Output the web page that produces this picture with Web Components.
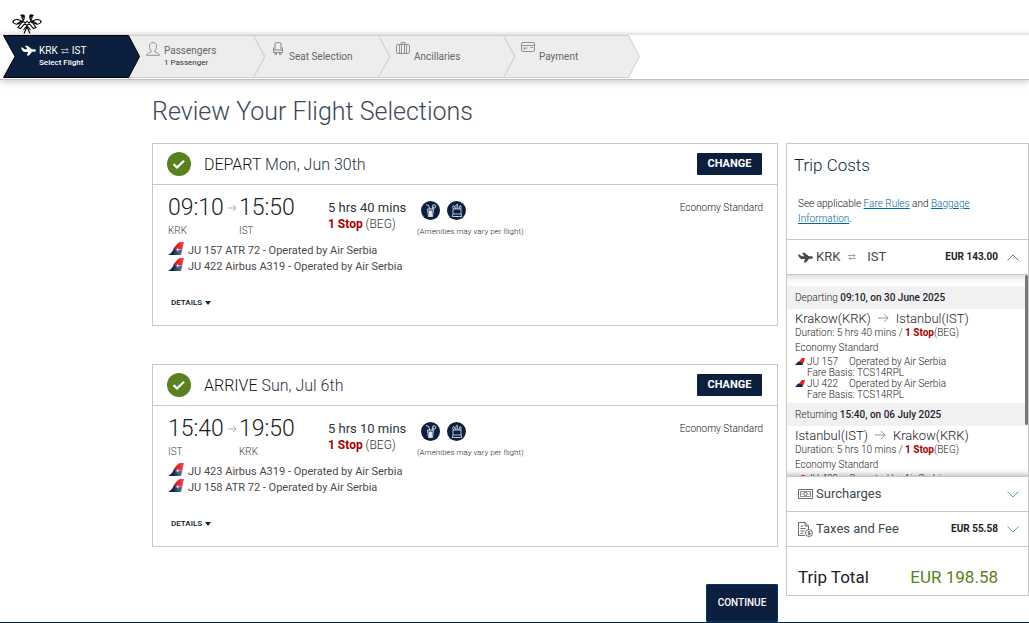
<!DOCTYPE html>
<html lang="en">
<head>
<meta charset="utf-8">
<meta name="viewport" content="width=device-width, initial-scale=1">
<title>Review Your Flight Selections</title>
<style>
  :root { --navy: #0c1f3f; --line: #c8c8c8; --red: #a60000; --green: #5a8020; --text: #2c3440; }
  body { margin: 0; font-family: Roboto, "Liberation Sans", sans-serif; color: var(--text); background: #fff; }
</style>
</head>
<body>
<booking-page></booking-page>

<script>
const ICONS = {
  plane: '<svg viewBox="0 0 15 11" width="15" height="11"><path fill="currentColor" d="M0 2.500h1.500l2 1.800h3L4 .8h2.500L11 4.300h2.200c1.200 0 1.800.6 1.800 1.200s-.8 1.300-1.900 1.300h-2L8 10.500H5.800L7 7H3.400C2 6.800.8 5 0 2.500z"/></svg>',
  person: '<svg viewBox="0 0 14 14" width="14" height="14" fill="none" stroke="currentColor" stroke-width=".9"><path d="M5.200 8.800C3.900 7.700 3.500 6 3.500 4.200 3.500 2 5 .6 7 .6s3.500 1.400 3.500 3.600c0 1.800-.4 3.500-1.700 4.600v1.200c1.800.6 4 1 4.700 3.300H.5C1.200 11 3.400 10.600 5.200 10z"/></svg>',
  seat: '<svg viewBox="0 0 10 13" width="10" height="13" fill="none" stroke="currentColor"><path d="M2 7.500V2Q2 .6 3.500.6h3Q8 .6 8 2v5.500M.6 5.500v5h8.800v-5M.6 8h8.800M2 10.500v2h1.500v-2M6.500 10.500v2H8v-2"/></svg>',
  bag: '<svg viewBox="0 0 14 12" width="14" height="12" fill="none" stroke="currentColor" stroke-width=".9"><rect x=".5" y="2.500" width="13" height="9" rx="1.500"/><path d="M5 2.500V.6h4v1.900M3.500 2.500v9M5.500 2.500v9M8.500 2.500v9M10.500 2.500v9"/></svg>',
  card: '<svg viewBox="0 0 14 10" width="14" height="10" fill="none" stroke="currentColor" stroke-width=".9"><rect x=".5" y=".5" width="13" height="9" rx="1.500"/><path d="M.5 3.500h13M2.500 6h4M2.500 7h2M9.500 5.500h2.500"/></svg>',
  swap: '<svg viewBox="0 0 8 6" width="8" height="6" fill="none" stroke="currentColor" stroke-width=".8"><path d="M0 1.500h7M5.500 0L7 1.500 5.500 3M8 4.500H1M2.500 3L1 4.500 2.500 6"/></svg>',
  arrow: '<svg viewBox="0 0 11 10" width="11" height="10" fill="none" stroke="currentColor" stroke-width=".9"><path d="M0 5h10M6 .8L10.200 5 6 9.200"/></svg>',
  smallArrow: '<svg viewBox="0 0 9 8" width="9" height="8" fill="none" stroke="currentColor" stroke-width=".8"><path d="M0 4h8M5 1l3 3-3 3"/></svg>',
  check: '<svg viewBox="0 0 24 24" width="24" height="24"><circle cx="12" cy="12" r="12" fill="#5a8020"/><path d="M6.500 12.200l3.500 3.300 7-6.800" fill="none" stroke="#fff" stroke-width="2.300"/></svg>',
  tail: '<svg viewBox="0 0 16 13" width="16" height="13"><defs><linearGradient id="r"><stop stop-color="#a81c26"/><stop offset=".55" stop-color="#f0202a"/><stop offset="1" stop-color="#e86060"/></linearGradient><linearGradient id="b"><stop offset=".3" stop-color="#101f44"/><stop offset="1" stop-color="#6c7a98"/></linearGradient></defs><path d="M12 0h4l-1.700 7.500H5Q9 1 12 0z" fill="url(#r)"/><path d="M6 6.500q4 2 8.500.5L13 13H0q3.500-1.500 6-6.500z" fill="url(#b)"/><path d="M9.500 5.500l.8 1.700 1.700.3-1.600.8-.4 1.700-.8-1.600-1.700-.3 1.500-.8z" fill="#dfe3ee"/></svg>',
  drink: '<svg viewBox="0 0 19 19" width="19" height="19"><circle cx="9.500" cy="9.500" r="9.500" fill="#0c1f3f"/><g fill="none" stroke="#fff" stroke-width=".8"><path d="M5 3.500l2.500 1 1.500 4M6.500 8h6l-1 7.500h-4zM11 8l1.500-2.500"/><circle cx="13" cy="5.500" r="1.700"/></g><path d="M7.500 9.500h4l-.6 5.500H8.200z" fill="#dfe3ea"/></svg>',
  snack: '<svg viewBox="0 0 19 19" width="19" height="19"><circle cx="9.500" cy="9.500" r="9.500" fill="#0c1f3f"/><g fill="none" stroke="#dfe3ea" stroke-width=".8"><path d="M6 8h8v5H6zM6 13l-.8 2.500h9.600L14 13M6.500 8L5.500 5.500 7 4.500 8.500 8M9 8V4l1.500-.8L11 8M12 8l1-3.500 1 .5v3M8.500 15.500h3"/></g></svg>',
  money: '<svg viewBox="0 0 15 10" width="15" height="10" fill="none" stroke="currentColor" stroke-width=".8"><path d="M.5.5h14v9H.5z"/><path d="M2.500 2.500h10v5h-10z" stroke-width=".6"/><circle cx="7.500" cy="5" r="1.700"/><path d="M3.500 5h1M10.500 5h1"/></svg>',
  receipt: '<svg viewBox="0 0 15 15" width="15" height="15" fill="none" stroke="currentColor" stroke-width=".8"><path d="M7 13.500H.5V.5H7L10.500 4v3M7 .5V4h3.500M2.500 4h2.500M2.500 6.500h5M2.500 9h4M2.500 11.300h3"/><circle cx="11" cy="11" r="3.500"/><path d="M12.200 9.700Q10 9 10 10.200T12 11.600 9.900 12.500M11 8.800v4.500" stroke-width=".7"/></svg>',
  up: '<svg viewBox="0 0 12 7" width="12" height="7" fill="none" stroke="currentColor" stroke-width=".9"><path d="M.5 6.500L6 1l5.500 5.500"/></svg>',
  down: '<svg viewBox="0 0 12 7" width="12" height="7" fill="none" stroke="currentColor" stroke-width=".9"><path d="M.5.5L6 6 11.500.5"/></svg>',
  logo: '<svg viewBox="0 0 30 20" width="30" height="20" fill="none" stroke="#000" stroke-width="1.100"><path d="M9.500 2.500L12 8l6.500 8M20.500 2.500L18 8l-6.500 8M12 1.500V5L6 13.500l2.500 1L15 7M18 1.500V5l6 8.500-2.500 1L15 7M15 13l-3 6.500M15 13l3 6.500"/><path d="M11 9C7 4 2 5 .8 8c2 3 6.200 3 8.200-.5M5 10l5-3.500M19 9c4-5 9-4 10.200-1-2 3-6.200 3-8.200-.5M25 10l-5-3.500"/><path d="M8 1.800L9.800.3l2.700.5v3.500L10 2.800zM22 1.800L20.200.3l-2.700.5v3.500L20 2.800z" fill="#000" stroke="none"/></svg>'
};

function define(name, css, markup) {
  customElements.define(name, class extends HTMLElement {
    connectedCallback() {
      if (this.shadowRoot) return;
      const t = document.createElement('template');
      const get = a => this.getAttribute(a) || '';
      t.innerHTML = `<style>:host{display:block}*{box-sizing:border-box}svg{display:block;flex:none}${css}</style>` +
        (typeof markup === 'function' ? markup(get) : markup);
      this.attachShadow({ mode: 'open' }).append(t.content.cloneNode(true));
    }
  });
}

define('ui-icon', ':host{display:block;flex:none}', g => ICONS[g('name')]);

define('step-item', `
  :host { position: relative; flex: 0 1 125px; height: 44px; color: #666; --fill: #ededed; --edge: #d0d0d0; }
  :host([current]) { color: #fff; --fill: #0c1f3f; --edge: #000; z-index: 1; }
  .shape { position: absolute; left: 0; top: 0; }
  .shape path { fill: var(--fill); stroke: var(--edge); }
  a { position: relative; display: flex; gap: 4px; padding: 7px 0 0 18px; color: inherit; text-decoration: none; font-size: 10px; line-height: 12px; }
  .label { padding-top: 3px; white-space: nowrap; }
  :host([single]) .label { padding-top: 9px; }
  ui-icon { display: flex; justify-content: center; width: 14px; color: #888; }
  :host([current]) ui-icon { color: #fff; padding-top: 3px; }
  .sub { display: block; font-size: 8px; color: #333; }
  :host([current]) .sub { color: #fff; font-weight: 500; }
`, g => `<svg class="shape" width="138" height="44" viewBox="0 0 138 44"><path d="M.5.500H125.500L136.500 21.500 125.500 42.500H.5L12 21.500z"/></svg>
  <a href="#"><ui-icon name="${g('icon')}"></ui-icon><span class="label"><slot></slot><span class="sub">${g('sub')}</span></span></a>`);

define('site-header', `
  .brand { height: 35px; padding: 14px 0 0 12px; box-shadow: inset 0 -6px 5px -5px #ddd; }
  nav { display: flex; height: 45px; padding-left: 3px; border-bottom: 1px solid #c0c0c0; box-shadow: 0 2px 7px #ccc; }
  .route { display: flex; align-items: center; gap: 3px; }
  .route ui-icon { color: #ccc; }
`, `<div class="brand"><ui-icon name="logo"></ui-icon></div>
  <nav aria-label="Booking steps">
    <step-item current icon="plane" sub="Select Flight"><span class="route">KRK <ui-icon name="swap"></ui-icon> IST</span></step-item>
    <step-item icon="person" sub="1 Passenger">Passengers</step-item>
    <step-item single icon="seat">Seat Selection</step-item>
    <step-item single icon="bag">Ancillaries</step-item>
    <step-item single icon="card">Payment</step-item>
  </nav>`);

define('flight-card', `
  :host { box-sizing: border-box; border: 1px solid var(--line); min-height: 183px; background: #fff; }
  header { display: flex; align-items: center; height: 41px; padding: 0 15px 0 14px; border-bottom: 1px solid var(--line); }
  h2 { flex: 1; margin: 0 0 0 13px; padding-top: 2px; font-size: 16px; line-height: 24px; font-weight: 300; }
  h2 span { color: #111; }
  .change { width: 65px; height: 22px; padding: 0; border: 0; border-radius: 1px; background: var(--navy); color: #fff; font: 700 11px/22px Roboto, sans-serif; }
  .body { display: grid; grid-template-columns: 160px 89px 1fr auto; padding: 8px 14px 0 15px; }
  .times { display: grid; grid-template-columns: 57px 14px auto; justify-content: start; align-items: center; font-size: 23px; line-height: 30px; font-weight: 300; color: #1c1c1c; }
  .times small { font-size: 10px; line-height: 16px; color: #444; }
  .times ui-icon { color: #999; padding-left: 3px; }
  .duration { padding-top: 6px; font-size: 13px; line-height: 17px; }
  .duration p { margin: 0; font-size: 12px; font-weight: 300; }
  b { color: var(--red); font-weight: 700; }
  .amenities { display: flex; gap: 7px; padding: 8px 0 0 4px; }
  .note { margin: 6px 0 0; font-size: 8px; line-height: 12px; font-weight: 300; color: #222; }
  .fare { font-size: 10px; line-height: 30px; font-weight: 300; color: #111; }
  ul { margin: 3px 0 0 15px; padding: 0; list-style: none; font-size: 11px; line-height: 16px; font-weight: 400; color: #4a4a4a; }
  .details { display: flex; align-items: center; gap: 3px; margin: 22px 0 0 18px; padding: 0; border: 0; background: none; font: 500 8px/14px Roboto, sans-serif; color: #111; }
  .details::after { content: ""; border: 3px solid transparent; border-top: 4px solid var(--navy); border-bottom: 0; }
`, g => `<header><ui-icon name="check"></ui-icon><h2><span>${g('kind')}</span> ${g('date')}</h2><button class="change" type="button">CHANGE</button></header>
  <div class="body">
    <div class="times"><span>${g('start')}</span><ui-icon name="smallArrow"></ui-icon><span>${g('end')}</span><small>${g('from')}</small><i></i><small>${g('to')}</small></div>
    <div class="duration">${g('time')}<p><b>1 Stop</b> (BEG)</p></div>
    <div><div class="amenities"><ui-icon name="drink"></ui-icon><ui-icon name="snack"></ui-icon></div><p class="note">(Amenities may vary per flight)</p></div>
    <div class="fare">Economy Standard</div>
  </div>
  <ul role="list"><slot></slot></ul>
  <button class="details" type="button">DETAILS</button>`);

define('flight-leg', `:host { display: flex; gap: 4px; line-height: 16px; } span { padding-top: 1px; line-height: 15px; } ui-icon { width: 16px; height: 13px; }`,
  `<ui-icon name="tail"></ui-icon><span><slot></slot></span>`);

define('trip-leg', `
  h3 { margin: 0; padding-left: 8px; font-size: 10px; line-height: 23px; font-weight: 300; background: #f1f1f1; color: #222; }
  h3 b { font-weight: 500; color: #1c2430; }
  .info { padding: 0 8px; font-size: 10px; font-weight: 300; }
  .places { display: flex; align-items: center; gap: 7px; font-size: 13px; line-height: 19px; height: 18px; font-weight: 300; color: #222; }
  .places ui-icon { color: #888; }
  p { margin: 0; line-height: 11px; color: #222; }
  p b { color: var(--red); font-weight: 700; }
  .cabin { padding-top: 4px; line-height: 12px; }
  .seg { display: grid; grid-template-columns: 12px 42px 1fr; line-height: 11px; color: #222; }
  .segs { padding: 2px 0 3px; }
  .seg .basis { grid-column: 2 / 4; }
`, g => {
    const seg = n => `<div class="seg"><tail-mini></tail-mini><span>${n}</span><span>Operated by Air Serbia</span><span class="basis">Fare Basis: TCS14RPL</span></div>`;
    return `<h3>${g('kind')} <b>${g('when')}</b></h3>
    <div class="info"><div class="places">${g('from')} <ui-icon name="arrow"></ui-icon> ${g('to')}</div>
    <p>Duration: ${g('time')} / <b>1 Stop</b>(BEG)</p><p class="cabin">Economy Standard</p>
    <div class="segs">${g('flights').split(',').map(seg).join('')}</div></div>`;
  });

define('tail-mini', ':host{padding-top:2px}', '<svg viewBox="0 0 16 12" width="10" height="7" preserveAspectRatio="none"><path d="M11 0h5l-2 8H5z" fill="#e5202b"/><path d="M5 6l8 2-1 4H0z" fill="#16264c"/></svg>');

define('cost-row', `
  button { display: flex; align-items: center; width: 100%; height: 34px; padding: 0 9px 0 11px; border: 0; background: #fff; text-align: left; font: 400 13px/20px Roboto, sans-serif; color: #40474f; }
  .name { flex: 1; display: flex; align-items: center; gap: 8px; padding-left: 3px; }
  b { font-size: 10px; font-weight: 700; color: #222; margin-right: 9px; }
  .chev { color: #4a90ae; }
  :host([open]) .chev { color: #667; }
`, g => `<button type="button"><ui-icon name="${g('icon')}"></ui-icon><span class="name"><slot></slot></span><b>${g('price')}</b><ui-icon class="chev" name="${g('chev')}"></ui-icon></button>`);

define('trip-costs', `
  :host { border: 1px solid var(--line); background: #fff; }
  h2 { margin: 0; padding: 8px 7px 0; font-size: 17px; line-height: 26px; font-weight: 300; color: #0c1f3f; }
  .rules { margin: 0; padding: 18px 40px 13px 11px; font-size: 10px; line-height: 15px; font-weight: 300; color: #111; }
  a { color: #0067a5; text-decoration: underline; }
  cost-row, .total { border-top: 1px solid var(--line); }
  .scroll { position: relative; height: 202px; overflow: hidden; border-top: 1px solid var(--line); padding-top: 11px; box-shadow: inset 0 9px 9px -8px #ccc, inset 0 -8px 7px -8px #999; }
  .thumb { position: absolute; right: 0; top: 0; width: 3px; height: 150px; background: #777; border-radius: 2px; }
  .swap { color: #888; padding-right: 3px; }
  .total { display: flex; justify-content: space-between; align-items: center; height: 49px; padding: 11px 30px 0 11px; font-size: 17px; color: #222; }
  .total b { font-weight: 400; color: var(--green); }
`, `<h2>Trip Costs</h2>
  <p class="rules">See applicable <a href="#">Fare Rules</a> and <a href="#">Baggage Information</a>.</p>
  <cost-row open icon="plane" price="EUR 143.00" chev="up"><span>KRK</span><ui-icon class="swap" name="swap"></ui-icon><span>IST</span></cost-row>
  <div class="scroll">
    <trip-leg kind="Departing" when="09:10, on 30 June 2025" from="Krakow(KRK)" to="Istanbul(IST)" time="5 hrs 40 mins" flights="JU 157,JU 422"></trip-leg>
    <trip-leg kind="Returning" when="15:40, on 06 July 2025" from="Istanbul(IST)" to="Krakow(KRK)" time="5 hrs 10 mins" flights="JU 423,JU 158"></trip-leg>
    <div class="thumb"></div>
  </div>
  <cost-row icon="money" chev="down">Surcharges</cost-row>
  <cost-row icon="receipt" price="EUR 55.58" chev="down">Taxes and Fee</cost-row>
  <div class="total"><span>Trip Total</span><b>EUR 198.58</b></div>`);

define('booking-page', `
  .page { border-bottom: 1px solid var(--navy); }
  main { display: grid; grid-template-columns: minmax(0, 1fr) 243px; column-gap: 8px; align-items: start; padding-left: 152px; }
  h1 { grid-column: 1 / 3; margin: 15px 0; font-size: 25px; line-height: 33px; font-weight: 300; color: #3c4858; }
  .flights { display: grid; row-gap: 38px; }
  .actions { display: flex; justify-content: flex-end; padding-top: 37px; }
  .continue { width: 72px; height: 38px; padding: 0; border: 1px solid #003a63; border-radius: 1px; background: var(--navy); color: #fff; font: 500 10px/20px Roboto, sans-serif; }
`, `<div class="page"><site-header></site-header><main>
  <h1>Review Your Flight Selections</h1>
  <div><div class="flights">
    <flight-card kind="DEPART" date="Mon, Jun 30th" start="09:10" end="15:50" from="KRK" to="IST" time="5 hrs 40 mins"><flight-leg role="listitem">JU 157 ATR 72 - Operated by Air Serbia</flight-leg><flight-leg role="listitem">JU 422 Airbus A319 - Operated by Air Serbia</flight-leg></flight-card>
    <flight-card kind="ARRIVE" date="Sun, Jul 6th" start="15:40" end="19:50" from="IST" to="KRK" time="5 hrs 10 mins"><flight-leg role="listitem">JU 423 Airbus A319 - Operated by Air Serbia</flight-leg><flight-leg role="listitem">JU 158 ATR 72 - Operated by Air Serbia</flight-leg></flight-card>
  </div>
  <div class="actions"><button class="continue" type="button">CONTINUE</button></div></div>
  <trip-costs></trip-costs>
</main></div>`);
</script>
</body>
</html>
